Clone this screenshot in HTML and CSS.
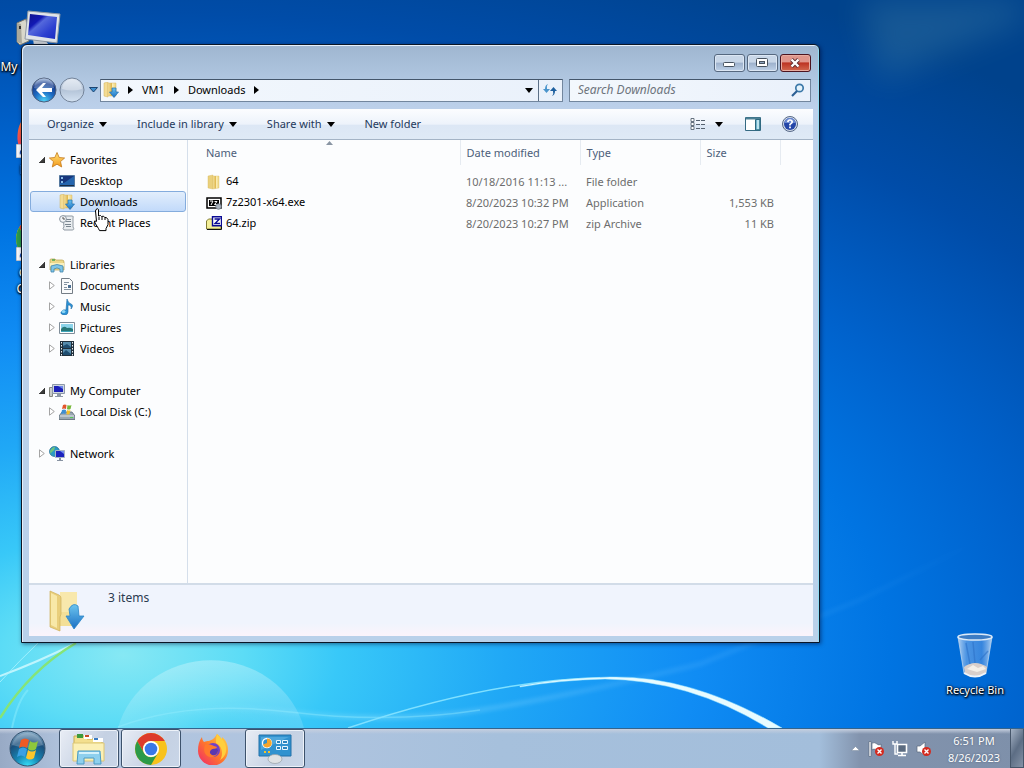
FILE: index.html
```html
<!DOCTYPE html>
<html lang="en">
<head>
<meta charset="utf-8">
<title>Downloads</title>
<link rel="stylesheet" href="styles.css">
</head>
<body>
<svg class="defs" aria-hidden="true">
  <defs>
    <linearGradient id="g-folder" x1="0" x2="1"><stop offset="0" stop-color="#f6e3a0"/><stop offset=".45" stop-color="#dfb850"/><stop offset=".55" stop-color="#fbeeb6"/><stop offset="1" stop-color="#ecd27c"/></linearGradient>
    <linearGradient id="g-arrow" x1="0" x2="0" y1="0" y2="1"><stop offset="0" stop-color="#6cc4ee"/><stop offset="1" stop-color="#1a6fc4"/></linearGradient>
    <linearGradient id="g-screen" x1="0" x2="1" y1="0" y2="1"><stop offset="0" stop-color="#10148c"/><stop offset=".3" stop-color="#1218b4"/><stop offset=".4" stop-color="#5468dc"/><stop offset=".7" stop-color="#2c40d0"/><stop offset="1" stop-color="#1b2cc0"/></linearGradient>
    <linearGradient id="g-star" x1="0" x2="0" y1="0" y2="1"><stop offset="0" stop-color="#ffe27a"/><stop offset="1" stop-color="#f39a1c"/></linearGradient>
    <linearGradient id="g-fx" x1="1" x2="0" y1="0" y2="1"><stop offset="0" stop-color="#ffe04a"/><stop offset=".5" stop-color="#ff7a2a"/><stop offset="1" stop-color="#f0246e"/></linearGradient>
    <radialGradient id="g-back" cx=".5" cy=".95" r=".9"><stop offset="0" stop-color="#4fd2f6"/><stop offset=".45" stop-color="#1c6cc4"/><stop offset=".8" stop-color="#173c8c"/><stop offset="1" stop-color="#8aa6d0"/></radialGradient>
    <linearGradient id="g-fwd" x1="0" x2="0" y1="0" y2="1"><stop offset="0" stop-color="#d8e2ee"/><stop offset=".5" stop-color="#b4c4d8"/><stop offset="1" stop-color="#d4e2f2"/></linearGradient>
    <radialGradient id="g-orb" cx=".5" cy="1" r="1"><stop offset="0" stop-color="#35e0f8"/><stop offset=".35" stop-color="#1686b4"/><stop offset=".7" stop-color="#1b4f7c"/><stop offset="1" stop-color="#8fb2cc"/></radialGradient>
    <linearGradient id="g-bin" x1="0" x2="1"><stop offset="0" stop-color="#cfe2f6" stop-opacity=".85"/><stop offset=".25" stop-color="#7fb0ea" stop-opacity=".6"/><stop offset=".7" stop-color="#5a98e4" stop-opacity=".6"/><stop offset="1" stop-color="#cfe2f6" stop-opacity=".85"/></linearGradient>
    <linearGradient id="g-ray" x1="0" x2="1"><stop offset="0" stop-color="#9fe6ff" stop-opacity="0"/><stop offset=".3" stop-color="#9fe6ff"/><stop offset=".7" stop-color="#5cb8ff" stop-opacity=".6"/><stop offset="1" stop-color="#5cb8ff" stop-opacity="0"/></linearGradient>
    <radialGradient id="g-dome" cx=".5" cy="1" r="1"><stop offset="0" stop-color="#fff" stop-opacity="0"/><stop offset="1" stop-color="#fff" stop-opacity=".3"/></radialGradient>
    <filter id="soft"><feGaussianBlur stdDeviation="2"/></filter>
    <filter id="haze" x="-50%" y="-50%" width="200%" height="200%"><feGaussianBlur stdDeviation="16"/></filter>
  </defs>
  <symbol id="downloads" viewBox="0 0 16 16">
    <path d="M1 1l4-1v15l-4-1z" fill="#f3dc94" stroke="#d3b05a" stroke-width=".5"/>
    <path d="M5 1h8v13H5z" fill="url(#g-folder)" stroke="#d8bb68" stroke-width=".5"/>
    <path d="M9 6h4v4h2.500L11 15.500 6.500 10H9z" fill="url(#g-arrow)" stroke="#1c6db0" stroke-width=".7"/>
  </symbol>
  <symbol id="folder" viewBox="0 0 16 16">
    <path d="M2 2l5-1v14l-5-1z" fill="#ead07c" stroke="#d6b75c" stroke-width=".4"/>
    <path d="M7 2h6v12l-6 1z" fill="url(#g-folder)" stroke="#dcc070" stroke-width=".4"/>
  </symbol>
  <symbol id="computer" viewBox="0 0 46 38">
    <path d="M1 13l9-4 3 22-9 4-3-3z" fill="#d9d8cb" stroke="#77766e"/>
    <path d="M1 13l4 1 1 20-5-2z" fill="#aaa99c"/>
    <path d="M3 16h2v3H3z" fill="#333"/>
    <path d="M17 29l12 1 4 5-15 1z" fill="#c9ced2"/>
    <path d="M12 1l32 3-3 29-32-4z" fill="#dfe4e9" stroke="#8f99a5"/>
    <path d="M14 4l27 3-2 22-27-4z" fill="url(#g-screen)"/>
  </symbol>
  <symbol id="chrome" viewBox="0 0 32 32">
    <circle cx="16" cy="16" r="16" fill="#f8c21c"/>
    <path d="M2.200 8A16 16 0 0 1 29.800 8H16a8 8 0 0 0-7 12z" fill="#dd3b2c"/>
    <path d="M2.200 8A16 16 0 0 0 16 32l7-12a8 8 0 0 1-14 0z" fill="#2c9a48"/>
    <circle cx="16" cy="16" r="8" fill="#fff"/><circle cx="16" cy="16" r="6.300" fill="#3a78e8"/>
  </symbol>
  <symbol id="firefox" viewBox="0 0 32 32">
    <path d="M20 1c3 2 4 4 4 6 1-1 1-2 1-3 4 3 6 8 6 13A15 15 0 0 1 1 18C1 12 2 8 5 4c0 2 1 4 2 5 2-1 3-1 5-1 2-1 5-2 6-4z" fill="url(#g-fx)"/>
    <path d="M20 1c4 5 8 6 9 13 1 6-2 11-6 13 4-6 2-14-4-17 0-3 0-6 1-9z" fill="#ffcf3c"/>
    <circle cx="16" cy="17" r="7" fill="#7040c8"/>
    <path d="M8 12c4-2 7 0 9 1l3 1c-1 3-5 2-6 4 2 2 5 1 7-1 0 5-4 8-8 7-5-1-7-6-5-12z" fill="#ff7a2c"/><path d="M14 17c3-2 6-1 7 0 0 4-3 6-6 5-2-1-3-3-1-5z" fill="#5a37b0"/>
  </symbol>
  <symbol id="shortcut" viewBox="0 0 14 14"><path d="M0 0h14v14H0z" fill="#f4f6fa" stroke="#8a94a4"/><path d="M4 11c-1-4 1-6 4-6V3l4 4-4 4V8c-2 0-3 1-4 3z" fill="#1c50b0"/></symbol>
  <symbol id="caret" viewBox="0 0 8 5"><path d="M0 0h8L4 5z"/></symbol>
  <symbol id="crumb" viewBox="0 0 5 8"><path d="M0 0v8l5-4z"/></symbol>
  <symbol id="open" viewBox="0 0 6 6"><path d="M6 0v6H0z" fill="#3b3b3b" stroke="#111" stroke-width=".5"/></symbol>
  <symbol id="closed" viewBox="0 0 6 9"><path d="M.5.8v7.400L5.300 4.500z" fill="#fff" stroke="#9a9a9a" stroke-width=".9"/></symbol>
  <symbol id="bad" viewBox="0 0 9 9"><circle cx="4.500" cy="4.500" r="4.500" fill="#d42a1e"/><path d="M2.500 2.500l4 4m0-4l-4 4" stroke="#fff" stroke-width="1.400"/></symbol>
</svg>

<main class="desktop">
  <svg class="wallpaper" viewBox="0 0 1024 728" preserveAspectRatio="none" aria-hidden="true">
    <path d="M118 728A96 90 0 0 1 304 728z" fill="url(#g-dome)"/>
    <path d="M118 727Q190 700 290 712T480 710T700 664L860 600L980 540" fill="none" stroke="url(#g-ray)" stroke-width="4" opacity=".4" filter="url(#soft)"/>
    <path d="M118 727Q190 700 290 712T480 710" fill="none" stroke="#9ff0ff" stroke-width="1.500" opacity=".35"/>
    <path d="M860 0H1024V20L880 80z" fill="#5a9ab0" opacity=".25" filter="url(#haze)"/>
    <path d="M0 676Q38 662 76 643" fill="none" stroke="#d4faff" stroke-width="2" opacity=".8"/>
    <path d="M0 682Q20 660 38 643" fill="none" stroke="#aef4ff" stroke-width="1" opacity=".8"/>
    <path d="M0 718Q30 670 76 643" fill="none" stroke="#86e476" stroke-width="2.500"/>
    <path d="M12 728Q18 700 28 690" fill="none" stroke="#9af2ff" stroke-width="2" opacity=".4"/>
    <path d="M348 728Q490 680 600 678" fill="none" stroke="#7fe0ff" stroke-width="1.500"/>
    <path d="M520 686Q560 678 610 677Q692 675 782 728H768Q690 680 605 679Q560 680 520 687z" fill="#e8fbff" stroke="#9fe6ff" stroke-width=".5"/>
  </svg>

  <ul class="shortcuts">
    <li><a href="#computer"><svg width="46" height="46"><use href="#computer" width="46" height="38"/></svg><span>My Computer</span></a></li>
    <li><a href="#firefox"><svg width="46" height="46" viewBox="0 0 46 46"><use href="#firefox" width="46" height="46"/><use href="#shortcut" y="31" width="14" height="14"/></svg><span>Firefox</span></a></li>
    <li><a href="#chrome"><svg width="46" height="46" viewBox="0 0 46 46"><use href="#chrome" width="46" height="46"/><use href="#shortcut" y="31" width="14" height="14"/></svg><span>Google<br>Chrome</span></a></li>
  </ul>

  <a class="recycle" href="#bin">
    <svg width="38" height="46" viewBox="0 0 38 46"><path d="M2 4l6 36q11 7 22 0l6-36z" fill="url(#g-bin)" stroke="#b9d4f0" stroke-width=".8"/><path d="M8 34q11-8 23 0l-1 6q-11 6-21 0z" fill="#d9cfcb"/><path d="M11 36l6-4 5 3 5-2 3 3-9 3z" fill="#f4efe8"/><path d="M8 40q11 7 22 0" fill="none" stroke="#f0f4fa" stroke-width="2"/><path d="M10 10l4 21M17 9l2 21M32 18l-8 9" stroke="#2e72c8" stroke-width="1.500" opacity=".6"/><ellipse cx="19" cy="4" rx="17" ry="3" fill="#3c7cc4" stroke="#dceaf8" stroke-width="1.500"/></svg>
    <span>Recycle Bin</span>
  </a>

  <section class="window" aria-label="Downloads">
    <header class="caption">
      <button aria-label="Minimize"><svg width="12" height="10"><rect x=".5" y="4.500" width="11" height="4" rx="1" fill="#fff" stroke="#47525f"/></svg></button>
      <button aria-label="Maximize"><svg width="12" height="10"><rect x=".5" y=".5" width="11" height="8" rx="1" fill="#fff" stroke="#47525f"/><rect x="3.500" y="3.500" width="5" height="2" fill="#8fa5c0" stroke="#47525f"/></svg></button>
      <button class="close" aria-label="Close"><svg width="12" height="10" viewBox="0 0 12 10"><path d="M2.500 1.500l7 7m0-7l-7 7" stroke="#5e2b30" stroke-width="4"/><path d="M2.500 1.500l7 7m0-7l-7 7" stroke="#fff" stroke-width="2.400"/></svg></button>
    </header>

    <div class="location">
      <div class="history">
        <button aria-label="Back"><svg width="26" height="26"><circle cx="13" cy="13" r="12" fill="url(#g-back)" stroke="#4c5e7c"/><path d="M3 11A10 10 0 0 1 23 11Q13 14 3 11z" fill="#fff" opacity=".25"/><path d="M5 13l7-7h3l-4 5h10v4H11l4 5h-3z" fill="#fff"/></svg></button>
        <button aria-label="Forward"><svg width="26" height="26"><circle cx="13" cy="13" r="12" fill="url(#g-fwd)" stroke="#74849a"/><path d="M3 12A10 10 0 0 1 23 12Q13 15 3 12z" fill="#fff" opacity=".35"/></svg></button>
        <button class="recent" aria-label="Recent locations"><svg width="9" height="6"><path d="M.5.500h8L4.500 5z" fill="#3c8fd0" stroke="#1d4470"/></svg></button>
      </div>
      <nav class="address" aria-label="Address">
        <svg width="16" height="16"><use href="#downloads"/></svg>
        <svg width="5" height="8"><use href="#crumb"/></svg>
        <a href="#vm1">VM1</a>
        <svg width="5" height="8"><use href="#crumb"/></svg>
        <a href="#downloads-dir">Downloads</a>
        <svg width="5" height="8"><use href="#crumb"/></svg>
        <button class="previous" aria-label="Previous locations"><svg width="8" height="5"><use href="#caret"/></svg></button>
        <button class="refresh" aria-label="Refresh"><svg width="14" height="14" viewBox="0 0 14 14"><path d="M5 1Q3 3 4 6H7L3.500 10 0 6h2Q2 2 5 1z" fill="#4a94cc"/><path d="M9 13q2-2 1-5H7l3.500-4L14 8h-2q0 4-3 5z" fill="#1d5f9f"/></svg></button>
      </nav>
      <label class="search"><input type="search" placeholder="Search Downloads" aria-label="Search Downloads"><svg width="14" height="14"><circle cx="8.500" cy="5" r="3.700" fill="#e4f3fc" stroke="#3c78a8" stroke-width="1.700"/><path d="M6 8l-5 5" stroke="#2c5f94" stroke-width="2.200"/></svg></label>
    </div>

    <div class="toolbar">
      <button>Organize <svg width="8" height="5"><use href="#caret"/></svg></button>
      <button>Include in library <svg width="8" height="5"><use href="#caret"/></svg></button>
      <button>Share with <svg width="8" height="5"><use href="#caret"/></svg></button>
      <button>New folder</button>
      <div class="tools">
        <button class="views" aria-label="Change your view"><svg width="16" height="13"><path d="M1 .5h3v3H1zM1 4.500h3v3H1zM1 8.500h3v3H1z" fill="#fff" stroke="#66727f"/><path d="M6 2.500h4m1 0h4M6 6.500h4m1 0h4M6 10.500h4m1 0h4" stroke="#566270"/></svg><svg width="8" height="5"><use href="#caret"/></svg></button>
        <button aria-label="Preview pane"><svg width="16" height="14"><path d="M.5.500h15v13H.5z" fill="#fff" stroke="#356a82"/><path d="M1 1.500h14" stroke="#4b8095" stroke-width="2"/><path d="M10.500 2.500H15V13h-4.500z" fill="#71b4cc" stroke="#2d687f"/><path d="M13 3v9" stroke="#bde4ef" stroke-width="2"/></svg></button>
        <button aria-label="Get help"><svg width="16" height="16"><circle cx="8" cy="8" r="7.500" fill="#d5deea" stroke="#566887"/><circle cx="8" cy="8" r="6" fill="#2446a8"/><path d="M2.500 7a5.500 5 0 0 1 11 0z" fill="#6c8ad2"/><path d="M5.800 6.200Q6 4 8 4t2.200 1.900Q10.200 7 8 8.400v1" fill="none" stroke="#fff" stroke-width="1.700"/><path d="M7.100 10.500h1.800v1.700H7.100z" fill="#fff"/></svg></button>
      </div>
    </div>

    <div class="panes">
      <nav class="tree" aria-label="Folders">
        <section>
          <a href="#favorites"><svg width="6" height="6"><use href="#open"/></svg><svg width="16" height="16"><path d="M8 .5l2.200 5 5.400.5-4.100 3.600 1.200 5.400L8 12.200 3.300 15l1.200-5.400L.4 6l5.400-.5z" fill="url(#g-star)" stroke="#c4791a" stroke-width=".8"/></svg>Favorites</a>
          <a class="child" href="#desktop"><svg width="6" height="9"></svg><svg width="16" height="16"><path d="M.5 2.500h15v11H.5z" fill="#2565ae" stroke="#56799f"/><path d="M1 3h14L5 10H1z" fill="#17367c"/><path d="M2 4h2v2H2zM2 8h2v2H2z" fill="#8bbfe8"/><path d="M1 12.500h14" stroke="#182c44"/></svg>Desktop</a>
          <a class="child selected" href="#downloads-dir"><svg width="6" height="9"></svg><svg width="16" height="16"><use href="#downloads"/></svg>Downloads</a>
          <a class="child" href="#recent"><svg width="6" height="9"></svg><svg width="16" height="16"><path d="M4 1h9q2 0 1 2v9q2 3-1 3H5q-2-2 0-3z" fill="#e9edf0" stroke="#909aa3"/><path d="M7 4.500h5M7 6.500h5M6 9.500h6M7 11.500h5" stroke="#7b8791"/><circle cx="4" cy="4" r="3.400" fill="#f4f6f8" stroke="#8995a0"/><path d="M4 2v2h2" fill="none" stroke="#555"/></svg>Recent Places</a>
        </section>
        <section>
          <a href="#libraries"><svg width="6" height="6"><use href="#open"/></svg><svg width="16" height="16"><path d="M1 3q0-1 1-1h4l1 1h6q2 0 2 2v8H1z" fill="#edd88a" stroke="#b9a04e" stroke-width=".7"/><path d="M3 3h3" stroke="#4aa552" stroke-width="1.500"/><path d="M1 6h14v4H1z" fill="#faf0bd"/><path d="M2 15V9q6-3 12 0v6h-3v-3q-3-2-6 0v3z" fill="#7dc4e8" stroke="#4186ac" stroke-width=".8"/></svg>Libraries</a>
          <a class="child" href="#documents"><svg width="6" height="9"><use href="#closed"/></svg><svg width="16" height="16"><path d="M2.500.500h8l3 3v12h-11z" fill="#fafbfc" stroke="#747d86"/><path d="M5 4.500h5M5 6.500h3M5 9.500h3M5 11.500h7" stroke="#8493a1"/><path d="M9 7h3v3H9z" fill="#4b6f92"/></svg>Documents</a>
          <a class="child" href="#music"><svg width="6" height="9"><use href="#closed"/></svg><svg width="16" height="16"><path d="M8 0q1 4 4 5t0 5q1-4-3-4v7q0 3-4 3-4-1-3-3 2-3 5-2z" fill="#2b93d6" stroke="#1b68a4" stroke-width=".6"/><ellipse cx="4.500" cy="12.500" rx="2" ry="1.500" fill="#8dd5f4"/></svg>Music</a>
          <a class="child" href="#pictures"><svg width="6" height="9"><use href="#closed"/></svg><svg width="16" height="16"><path d="M.5 2.500h15v11H.5z" fill="#fff" stroke="#7f8d99"/><path d="M2 4h12v8H2z" fill="#8cd4ea"/><path d="M2 9q3-4 6-1 3-1 6 1v3H2z" fill="#287777"/><path d="M2 11h12v1H2z" fill="#40a7bb"/></svg>Pictures</a>
          <a class="child" href="#videos"><svg width="6" height="9"><use href="#closed"/></svg><svg width="16" height="16"><path d="M1 0h14v15H1z" fill="#20303c"/><path d="M4 1h8v6H4zM4 8h8v6H4z" fill="#568cad"/><path d="M4 5l4-2 4 3v1H4zM4 12l3-3 5 4v1H4z" fill="#1e4d70"/><path d="M2.500 1v14M13.500 1v14" stroke="#e9eef2" stroke-dasharray="1.500 1.500"/></svg>Videos</a>
        </section>
        <section>
          <a href="#computer"><svg width="6" height="6"><use href="#open"/></svg><svg width="16" height="16" viewBox="0 0 16 16"><path d="M.5 4.500h3v9h-3z" fill="#c9ccca" stroke="#84877f"/><path d="M3.500 1.500h12v9h-12z" fill="#cfd6df" stroke="#8c98a8"/><path d="M5 3h9v6H5z" fill="#1b1fb8"/><path d="M9 3h5v3z" fill="#6c86ea"/><path d="M8 11h4v2H8zM6 13h8v1H6z" fill="#8e99a6"/></svg>My Computer</a>
          <a class="child" href="#c"><svg width="6" height="9"><use href="#closed"/></svg><svg width="16" height="16"><path d="M3 8h10l3 4v3.500H0V12z" fill="#9aa7b2" stroke="#596773" stroke-width=".8"/><path d="M1 12h14" stroke="#dee5ea"/><path d="M11 13h3v1h-3z" fill="#54c856"/><path d="M4 1q2-1 3.500 0L7 5Q5 4 3 5z" fill="#e2562c"/><path d="M8.500 1q2 1 4 0l-1 4q-2 1-3.500 0z" fill="#76b838"/><path d="M3 6q2-1 4 0l-.5 4Q5 9 2 10z" fill="#3d8ed4"/><path d="M8 6q2 1 3.500 0l-1 4q-2 1-3 0z" fill="#f4bf2a"/></svg>Local Disk (C:)</a>
        </section>
        <section>
          <a href="#network"><svg width="6" height="9"><use href="#closed"/></svg><svg width="16" height="16"><circle cx="5.500" cy="5.500" r="5" fill="#2c9ac4" stroke="#1d688f" stroke-width=".7"/><path d="M1 5q2-4 5-4 0 3-3 5t2 4Q1 9 1 5z" fill="#70c47c"/><path d="M6.500 4.500h9v7h-9z" fill="#1b22bd" stroke="#aab6c4"/><path d="M11 5h4v3z" fill="#738df0"/><path d="M10 12h2v2h-2zM8 14h6v1H8z" fill="#8893a2"/></svg>Network</a>
        </section>
      </nav>

      <div class="files">
        <svg class="sorted" width="7" height="4" aria-hidden="true"><path d="M0 4h7L3.500 0z" fill="#8995a3"/></svg>
        <table>
          <colgroup><col class="c-name"><col class="c-date"><col class="c-type"><col class="c-size"><col></colgroup>
          <thead><tr><th>Name</th><th>Date modified</th><th>Type</th><th>Size</th><th></th></tr></thead>
          <tbody>
            <tr><td><svg width="16" height="16"><use href="#folder"/></svg>64</td><td>10/18/2016 11:13 ...</td><td>File folder</td><td></td><td></td></tr>
            <tr><td><svg width="16" height="16"><path d="M1 3h14v10H1z" fill="#fff" stroke="#000" stroke-width="1.500"/><path d="M3 5h10v6H3z" fill="#000"/><path d="M4 6h3L5 10M8.500 6.500H11L8.500 9.500H11" fill="none" stroke="#fff"/><circle cx="12.500" cy="11.500" r="2.800" fill="#a8b2bd" stroke="#65717d" stroke-width=".7"/></svg>7z2301-x64.exe</td><td>8/20/2023 10:32 PM</td><td>Application</td><td>1,553 KB</td><td></td></tr>
            <tr><td><svg width="16" height="16"><path d="M.5 5l2-2H6l1 2h8v8H.5z" fill="#f4ef98" stroke="#817d34"/><path d="M1 13.500h14.500V6" stroke="#111" fill="none"/><path d="M6.500.700h9v9h-9z" fill="#fff" stroke="#0a0a94" stroke-width="1.400"/><path d="M8.500 3h5l-4.500 4.500h5" fill="none" stroke="#0a0a94" stroke-width="1.400"/></svg>64.zip</td><td>8/20/2023 10:27 PM</td><td>zip Archive</td><td>11 KB</td><td></td></tr>
          </tbody>
        </table>
      </div>
    </div>

    <footer class="details">
      <svg width="36" height="42" viewBox="0 0 36 42"><path d="M11 2h17v34H11z" fill="#f3df98"/><path d="M11 2h17v20H11z" fill="#fbefb9" opacity=".6"/><path d="M1 1l9 4q2 1 2 3v16l-1 3v14L1 37z" fill="#e9ce7b" stroke="#cfb05a" stroke-width=".7"/><path d="M2 3l6 3v32l-6-3z" fill="#f8e8a8"/><path d="M20 19q4-7 9-3l1 10h5l-10 13-8-13h4z" fill="url(#g-arrow)" stroke="#2c86c8" stroke-width=".8"/></svg>
      <span>3 items</span>
    </footer>
  </section>

  <svg class="pointer" width="15" height="24" viewBox="0 0 15 24" aria-hidden="true"><path d="M2 1.500Q3.500 0 4.500 1.500V8l2-.5 1 1 2-.3 1 1.200 2 .2 1.500 2v5l-2 4v2H5.500l-1-2L1 15l-.5-2 2 .300L1.500 3z" fill="#fff" stroke="#000"/><path d="M5 9v3M8 9v3M11 10v2" stroke="#000"/></svg>
</main>

<footer class="taskbar">
  <button class="start" aria-label="Start"><svg width="37" height="37" viewBox="0 0 37 37"><circle cx="18.500" cy="18.500" r="17.500" fill="url(#g-orb)" stroke="#32516d"/><path d="M3 15A16 16 0 0 1 34 15Q19 20 3 15z" fill="#fff" opacity=".22"/><path d="M12 10q4-3 8 0l-2 8q-4-3-8 0z" fill="#ef5a25"/><path d="M21 11q4 3 8 0l-2 8q-4 3-8 0z" fill="#8fc83c"/><path d="M10 19q4-3 8 0l-2 8q-4-3-8 0z" fill="#39a0e4"/><path d="M19 20q4 3 8 0l-2 8q-4 3-8 0z" fill="#fdc62c"/></svg></button>
  <button class="task running" aria-label="Windows Explorer"><svg width="34" height="32" viewBox="0 0 34 32"><path d="M2 3h11l2 3h15v20H2z" fill="#f3df8e" stroke="#c9ac53"/><path d="M5 1h6v4H5z" fill="#3d9a3c"/><path d="M12 2h8v4h-8z" fill="#fff"/><path d="M13 2h4v2h-4z" fill="#c84a24"/><path d="M21 5h10v4H21z" fill="#fff"/><path d="M22 5h4v2h-4z" fill="#3a7cc4"/><path d="M1 10h31v18H1z" fill="#fbf0b6" stroke="#dcc675"/><path d="M5 31l1-13h22l1 13h-7v-6H12v6z" fill="#8ed0ee" stroke="#4a9ac4"/><path d="M7 20h20" stroke="#d4f2fc" stroke-width="2"/></svg></button>
  <button class="task running" aria-label="Google Chrome"><svg width="32" height="32"><use href="#chrome"/></svg></button>
  <button class="task" aria-label="Firefox"><svg width="32" height="32"><use href="#firefox"/></svg></button>
  <button class="task running" aria-label="Control Panel"><svg width="34" height="30" viewBox="0 0 34 30"><path d="M1 1h32v21H1z" fill="#3192cf" stroke="#2371a8"/><path d="M3 3h28L3 16z" fill="#62b6e4" opacity=".6"/><circle cx="9" cy="9" r="4.500" fill="#3192cf" stroke="#fff" stroke-width="1.300"/><path d="M9 9V4.500a4.500 4.500 0 1 1-4 6z" fill="#f5a52c"/><path d="M18.500 6.500h4v3h-4zM24.500 6.500h5v3h-5zM18.500 12.500h4v3h-4zM24.500 12.500h5v3h-5z" fill="#2a84be" stroke="#e9f7ff"/><path d="M6 18h2m2 0h2" stroke="#f5c22c" stroke-width="2"/><ellipse cx="17" cy="25" rx="7" ry="4.500" fill="#dfe2e4" stroke="#959da3" stroke-width=".7"/></svg></button>
  <div class="tray">
    <button aria-label="Show hidden icons"><svg width="9" height="5"><path d="M.5 4.500h8l-4-4z" fill="#fff" stroke="#76869a" stroke-width=".5"/></svg></button>
    <button aria-label="Action Center"><svg width="16" height="16"><path d="M1 .5h2v15H1z" fill="#fff" stroke="#59697d" stroke-width=".7"/><path d="M4 2q3-1 5 1t4 0v7q-3 1-5-1T4 9z" fill="#fff" stroke="#59697d" stroke-width=".7"/><use href="#bad" x="7" y="6" width="9" height="9"/></svg></button>
    <button aria-label="Network"><svg width="16" height="16"><path d="M5.500 3.500h9v8h-9z" fill="#5b6b80" stroke="#fff" stroke-width="1.600"/><path d="M10 12v2M6 14.500h8" stroke="#fff" stroke-width="1.600"/><path d="M1 0v3h4V0M3 3v10h3" fill="none" stroke="#fff" stroke-width="1.400"/></svg></button>
    <button aria-label="Volume muted"><svg width="16" height="16"><path d="M1 5h3l5-4v14l-5-4H1z" fill="#fff" stroke="#59697d" stroke-width=".7"/><use href="#bad" x="6" y="6" width="9" height="9"/></svg></button>
    <time datetime="2023-08-26T18:51"><span>6:51 PM</span><span>8/26/2023</span></time>
  </div>
  <button class="peek" aria-label="Show desktop"></button>
</footer>
</body>
</html>
```
FILE: styles.css
```css
* { box-sizing: border-box; }

body {
  margin: 0;
  height: 100vh;
  display: flex;
  flex-direction: column;
  overflow: hidden;
  font: 11px/16px "Noto Sans", "Open Sans", sans-serif;
  color: #000;
}

a { color: inherit; text-decoration: none; }
svg { display: block; flex: none; }
button {
  display: flex;
  align-items: center;
  justify-content: center;
  padding: 0;
  border: 0;
  background: none;
  font: inherit;
  color: inherit;
}

.defs { position: absolute; width: 0; height: 0; }

/* Desktop */
.desktop {
  position: relative;
  flex: 1;
  min-height: 0;
  overflow: hidden;
  background: radial-gradient(ellipse 117% 93% at 12% 90%,
    #86e8f4 0, #5cdcf6 10%, #38c8f8 18%, #20a8f6 32%, #108cf4 48%,
    #0074e2 64%, #0062cc 77%, #004ca8 95%, #00428c 112%);
}
.wallpaper { position: absolute; inset: 0; width: 100%; height: 100%; }

.shortcuts {
  position: absolute;
  top: 10px;
  left: 0;
  width: 78px;
  margin: 0;
  padding: 0;
  list-style: none;
}
.shortcuts li { height: 103px; }
.shortcuts a, .recycle {
  display: flex;
  flex-direction: column;
  align-items: center;
  gap: 3px;
  color: #fff;
  font-size: 12px;
  text-align: center;
  text-shadow: 1px 1px 2px #000, 0 0 3px #000, 0 1px 2px #000;
}
.recycle { position: absolute; right: 12px; bottom: 30px; width: 74px; font-size: 11px; white-space: nowrap; }

.pointer { position: absolute; left: 94px; top: 208px; }

/* Window frame */
.window {
  position: absolute;
  left: 21px;
  top: 44px;
  width: 78%;
  bottom: 85px;
  display: flex;
  flex-direction: column;
  padding: 9px 6px 6px 7px;
  border: 1px solid #0b1626;
  border-radius: 6px 6px 0 0;
  background: linear-gradient(#9fb6d0 0, #b3c9e3 40px, #bcd0ea 62px, #b9d1ea 100%);
  box-shadow: inset 1px 1px 0 #e6f0fa, inset -1px 0 0 #8fdcf4, 1px 1px 4px rgba(0, 0, 40, .5);
}

.caption { display: flex; justify-content: flex-end; gap: 2px; margin-right: 2px; }
.caption button {
  width: 31px;
  height: 18px;
  border: 1px solid #56687f;
  border-radius: 3px;
  background: linear-gradient(#c9d7e8 0 45%, #9db1cc 50%, #bfd2e9);
  box-shadow: inset 0 0 0 1px #dce7f4;
}
.caption .close {
  border-color: #4c1420;
  background: linear-gradient(#e0968c 0 42%, #bd3423 50%, #d2694f);
  box-shadow: inset 0 0 0 1px #e8aca0;
}

.location { display: flex; align-items: center; gap: 6px; height: 26px; margin: 5px 2px 6px 2px; }
.history { display: flex; align-items: center; gap: 2px; width: 63px; }
.history .recent { margin-left: 2px; }

.address, .search {
  display: flex;
  align-items: center;
  height: 23px;
  border: 1px solid #72869e;
  border-top-color: #44566b;
  background: linear-gradient(90deg, #f3f8fd, #eaf1fb);
}
.address { flex: 1; gap: 9px; padding-left: 2px; }
.address button { height: 21px; width: 24px; }
.address .previous { width: 18px; margin-left: auto; margin-right: -9px; }
.address .refresh { border-left: 1px solid #5c7087; }
.search { width: 242px; padding: 0 5px 0 8px; }
.search input {
  flex: 1;
  min-width: 0;
  padding: 0;
  border: 0;
  outline: 0;
  background: none;
  font: inherit;
  font-size: 12px;
  font-style: italic;
}
.search input::placeholder { color: #6d747c; opacity: 1; }

.toolbar {
  display: flex;
  align-items: center;
  gap: 30px;
  height: 31px;
  padding: 0 15px 0 18px;
  border-bottom: 1px solid #a4b4c6;
  background: linear-gradient(#fcfdff 0, #edf3fb 50%, #dce7f5 55%, #dfeaf6 100%);
  color: #1e395b;
}
.toolbar button { gap: 5px; white-space: nowrap; }
.tools { display: flex; align-items: center; gap: 21px; margin-left: auto; }
.toolbar .views { gap: 9px; padding-right: 1px; }

/* Content */
.panes { display: flex; flex: 1; min-height: 0; background: #fcfdfe; }

.tree {
  display: flex;
  flex-direction: column;
  gap: 21px;
  width: 159px;
  padding: 9px 1px;
  border-right: 1px solid #d5dfeb;
}
.tree a {
  display: flex;
  align-items: center;
  gap: 4px;
  height: 21px;
  padding-left: 8px;
  border: 1px solid transparent;
  border-radius: 3px;
  white-space: nowrap;
}
.tree svg + svg { margin-right: 1px; }
.tree .child { padding-left: 18px; }
.tree .selected {
  border-color: #84acdd;
  background: linear-gradient(#e2eefc, #c2dafa);
}

.files { position: relative; flex: 1; min-width: 0; padding-left: 8px; }
.sorted { position: absolute; left: 138px; top: 1px; }
table { width: 100%; table-layout: fixed; border-collapse: collapse; }
.c-name { width: 264px; }
.c-date, .c-type { width: 120px; }
.c-size { width: 80px; }
th, td { padding: 0 6px; text-align: left; font-weight: 400; white-space: nowrap; overflow: hidden; }
th { height: 25px; border-right: 1px solid #e6ebf1; color: #4c607a; }
th:last-child { border-right: 0; }
thead::after { content: ""; display: block; height: 6px; }
td { height: 21px; color: #6d6d6d; }
th:first-child, td:first-child { padding-left: 10px; }
td:first-child { color: #000; }
td:first-child svg { display: inline-block; vertical-align: middle; margin-right: 4px; }
td:nth-child(4) { text-align: right; }

.details {
  display: flex;
  gap: 23px;
  height: 53px;
  padding: 5px 20px;
  border-top: 2px solid #d2dce8;
  background: linear-gradient(#f0f4fd 75%, #fbf4fb);
  color: #2b3a50;
  font-size: 12px;
}

/* Taskbar */
.taskbar {
  display: flex;
  flex: none;
  gap: 2px;
  height: 40px;
  border-top: 1px solid #35648c;
  background: linear-gradient(#c6cfdf 0, transparent 5px), linear-gradient(90deg, #98aac5 0, #b2c5df 70px, #afc4df 300px, #a6c0dc 500px, #a3bedb 80%, #8293ad 84%, #7e90aa 100%);
}
.start { width: 54px; margin-right: 3px; }
.task { width: 60px; height: 39px; border-radius: 3px; }
.running {
  border: 1px solid #3d526c;
  background: linear-gradient(120deg, #e9edf5, #c5d1e3 60%, #c9d6e8);
  box-shadow: inset 0 0 0 1px #edf2f9;
}
.tray { display: flex; align-items: center; gap: 8px; margin-left: auto; color: #fff; }
.tray time {
  display: flex;
  flex-direction: column;
  width: 68px;
  text-align: center;
  line-height: 17px;
  text-shadow: 0 0 2px #4a5b72;
}
.peek {
  width: 14px;
  border: 1px solid #46566a;
  border-top: 0;
  background: linear-gradient(120deg, #a5b3c5, #5c6d84 50%, #8492a6);
}
```
